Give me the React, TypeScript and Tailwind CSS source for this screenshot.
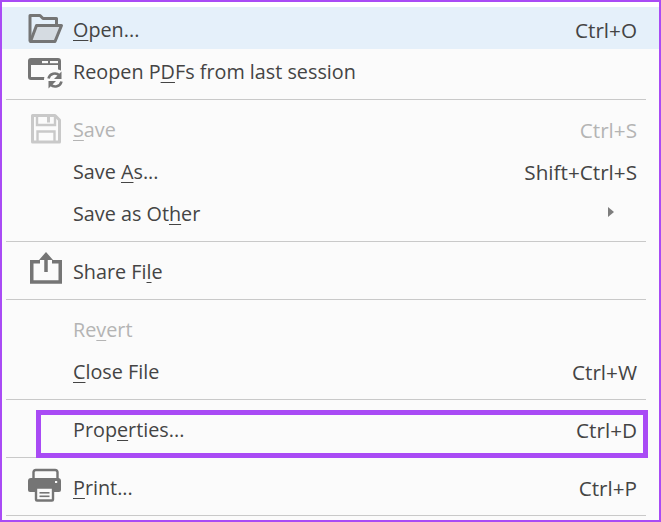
import type { ReactNode } from 'react'

const GRAY = '#757575'
const FADED = '#c9c9c9'

function Icon({ children }: { children: ReactNode }) {
  return (
    <svg width="40" height="40" viewBox="0 0 40 40" className="ml-[24px] mr-[7px] shrink-0">
      {children}
    </svg>
  )
}

function FolderIcon() {
  return (
    <Icon>
      <path d="M4 31.5V5.5H14L17 8.5H30.5V14" fill="none" stroke={GRAY} strokeWidth="3" strokeLinejoin="round" />
      <path d="M10.5 15.5H35.5L29 31.5H4.5Z" fill="#d5dbe1" stroke={GRAY} strokeWidth="3" strokeLinejoin="round" />
    </Icon>
  )
}

function ReopenIcon() {
  return (
    <Icon>
      <rect x="3.5" y="7.5" width="30" height="19" rx="1.5" fill="none" stroke={GRAY} strokeWidth="3" />
      <rect x="3" y="7" width="31" height="6" fill={GRAY} />
      <rect x="16" y="9" width="6" height="2.2" fill="#fbfbfb" />
      <rect x="24" y="9" width="8" height="2.2" fill="#fbfbfb" />
      <circle cx="29" cy="28" r="11" fill="#fbfbfb" />
      <path d="M22.5 26.5A6.5 6.5 0 0 1 33.5 23.5" fill="none" stroke={GRAY} strokeWidth="2.6" />
      <path d="M35.5 29.5A6.5 6.5 0 0 1 24.5 32.5" fill="none" stroke={GRAY} strokeWidth="2.6" />
      <path d="M35.5 19.5V27H28Z" fill={GRAY} />
      <path d="M22.5 36.5V29H30Z" fill={GRAY} />
    </Icon>
  )
}

function SaveIcon() {
  return (
    <Icon>
      <path d="M6.5 5.5H29L33.5 10V32H6.5Z" fill="none" stroke={FADED} strokeWidth="3" strokeLinejoin="round" />
      <path d="M11 5V15H29V5" fill="none" stroke={FADED} strokeWidth="2.4" />
      <rect x="21" y="7" width="3" height="5.5" fill={FADED} />
      <path d="M11.5 32V21.5H28.5V32" fill="none" stroke={FADED} strokeWidth="2.4" />
    </Icon>
  )
}

function ShareIcon() {
  return (
    <Icon>
      <path d="M14 9.75H5.75V30H34.25V9.75H26" fill="none" stroke={GRAY} strokeWidth="3.5" />
      <path d="M20 20V6" fill="none" stroke={GRAY} strokeWidth="3.5" />
      <path d="M20 0L27 8H13Z" fill={GRAY} />
    </Icon>
  )
}

function PrintIcon() {
  return (
    <Icon>
      <path d="M7.5 11V4A2.5 2.5 0 0 1 10 2H29A2.5 2.5 0 0 1 31.5 4V11" fill="none" stroke={GRAY} strokeWidth="2.4" />
      <path d="M5 10H32A3 3 0 0 1 35 13V22A2 2 0 0 1 33 24H4A2 2 0 0 1 2 22V13A3 3 0 0 1 5 10Z" fill={GRAY} />
      <rect x="10" y="19.5" width="17" height="13" rx="1" fill="#fbfbfb" stroke={GRAY} strokeWidth="2.4" />
      <rect x="13.5" y="24" width="10" height="1.6" fill={GRAY} />
      <rect x="13.5" y="27.5" width="10" height="1.6" fill={GRAY} />
      <rect x="29" y="13" width="2.2" height="2" fill="#fbfbfb" />
    </Icon>
  )
}

function Key({ children }: { children: ReactNode }) {
  return <span className="underline decoration-1 underline-offset-[3px]">{children}</span>
}

function Row({
  icon,
  label,
  shortcut,
  arrow,
  disabled,
}: {
  icon?: ReactNode
  label: ReactNode
  shortcut?: string
  arrow?: boolean
  disabled?: boolean
}) {
  return (
    <div className={`flex h-[42px] items-center pr-[22px] ${disabled ? 'text-[#b4b4b4]' : 'text-[#444444]'}`}>
      {icon ?? <div className="w-[71px] shrink-0" />}
      <span>{label}</span>
      <div className="flex-1" />
      {shortcut && <span className="text-[20.7px]">{shortcut}</span>}
      {arrow && (
        <svg width="8" height="12" viewBox="0 0 8 12" className="mr-[22px] mb-[4px]">
          <path d="M1 1L7 6L1 11Z" fill="#7d7d7d" />
        </svg>
      )}
    </div>
  )
}

function Divider() {
  return (
    <div className="h-[16px] pt-[6px] pl-[4px]">
      <div className="h-px w-[640px] bg-[#c9c9c9]" />
    </div>
  )
}

export default function App() {
  return (
    <div
      className="relative h-[522px] w-[661px] overflow-hidden border-2 border-[#a94bf5] bg-[#fbfbfb] text-[19.8px] leading-none"
      style={{ fontFamily: '"Open Sans", "Noto Sans", sans-serif' }}
    >
      <div className="h-[5px] bg-white" />
      <div className="mb-[2px] h-[42px] bg-[#e5f0fa] pt-[2px]">
        <Row icon={<FolderIcon />} label={<><Key>O</Key>pen...</>} shortcut="Ctrl+O" />
      </div>
      <Row icon={<ReopenIcon />} label={<>Reopen P<Key>D</Key>Fs from last session</>} />
      <Divider />
      <Row icon={<SaveIcon />} label={<><Key>S</Key>ave</>} shortcut="Ctrl+S" disabled />
      <Row label={<>Save <Key>A</Key>s...</>} shortcut="Shift+Ctrl+S" />
      <Row label={<>Save as Ot<Key>h</Key>er</>} arrow />
      <Divider />
      <Row icon={<ShareIcon />} label={<>Share Fi<Key>l</Key>e</>} />
      <Divider />
      <Row label={<>Re<Key>v</Key>ert</>} disabled />
      <Row label={<><Key>C</Key>lose File</>} shortcut="Ctrl+W" />
      <Divider />
      <Row label={<>Prop<Key>e</Key>rties...</>} shortcut="Ctrl+D" />
      <Divider />
      <Row icon={<PrintIcon />} label={<><Key>P</Key>rint...</>} shortcut="Ctrl+P" />
      <Divider />
      <div className="absolute left-[34px] top-[408px] h-[48px] w-[612px] border-[5px] border-[#a94bf5]" />
    </div>
  )
}
